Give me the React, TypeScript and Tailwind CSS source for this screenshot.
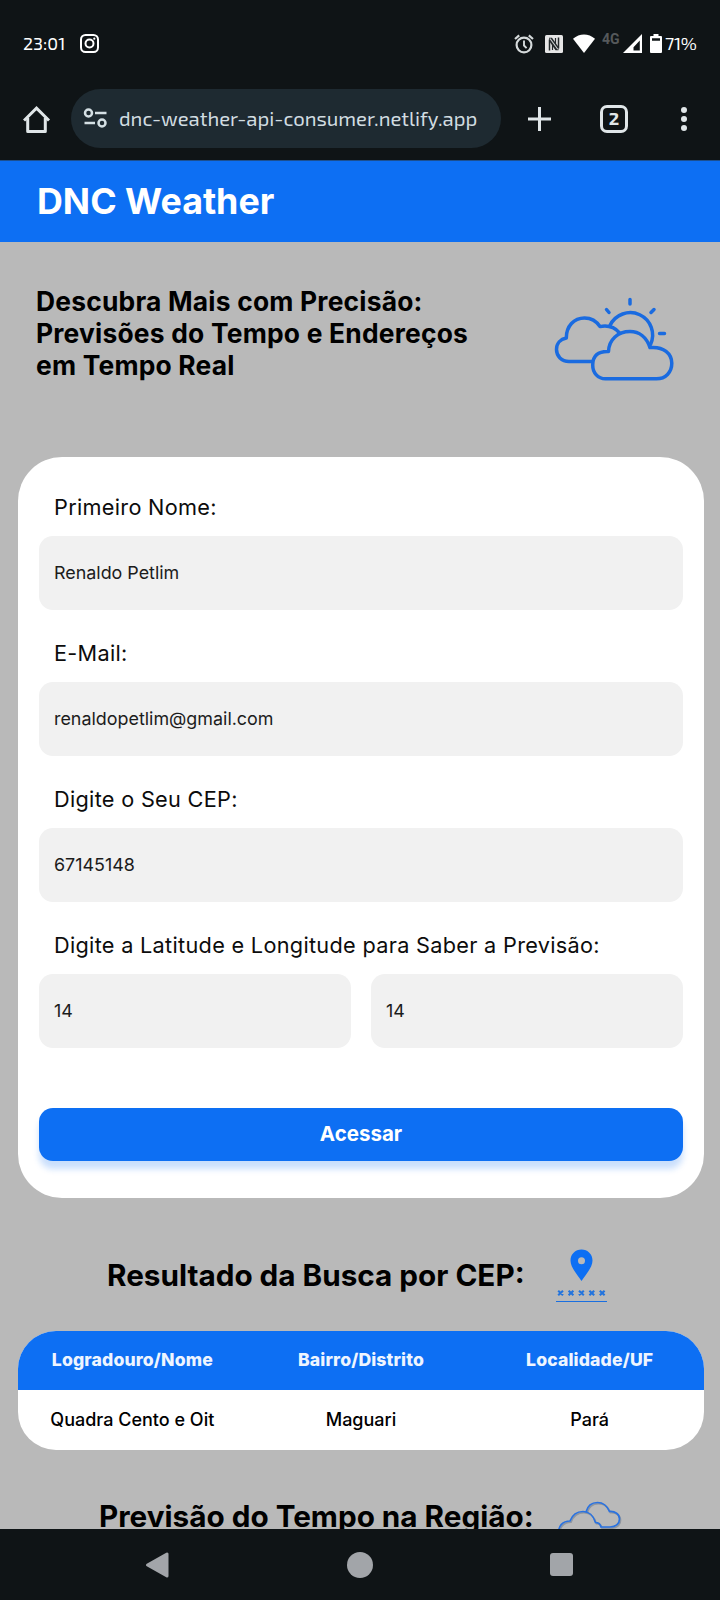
import type { ReactNode } from "react";

function StatusBar() {
  return (
    <div className="flex h-[87px] shrink-0 items-center pl-[23px] pr-[23px] font-['Exo_2','Noto_Sans',sans-serif] text-white">
      <span className="w-[42px] whitespace-nowrap text-[18px]">23:01</span>
      <svg className="ml-[15px]" width="19" height="19" viewBox="0 0 19 19" fill="none" stroke="white" strokeWidth="2">
        <rect x="1" y="1" width="17" height="17" rx="4.5" />
        <circle cx="9.5" cy="9.5" r="4" />
        <circle cx="14.3" cy="4.7" r="1.1" fill="white" stroke="none" />
      </svg>
      <div className="ml-auto flex items-center">
        <svg width="20" height="20" viewBox="0 0 20 20" fill="none" stroke="#d5dadb" strokeWidth="2.2">
          <circle cx="10" cy="11" r="7.4" />
          <path d="M10 6.500v5l2.600 2.600" strokeWidth="1.900" />
          <path d="M1 5 5.200 1.400M19 5l-4.200-3.600" />
        </svg>
        <svg className="ml-[11px]" width="18" height="18" viewBox="0 0 18 18">
          <rect width="18" height="18" rx="1.5" fill="#e6e6e6" />
          <path d="M4.500 15.500V4.500M13.500 2.500v11" fill="none" stroke="#22282a" strokeWidth="1.500" />
          <path d="M4 2.800h3L13.500 12V15.200h-3L4.500 6.500Z" fill="#22282a" />
          <path d="M7.500 15V8.500M10.500 3v6.500" fill="none" stroke="#22282a" strokeWidth="1.200" />
          <path d="M5 3.500 12.800 14.300" fill="none" stroke="#cfd2d3" strokeWidth="1.100" />
        </svg>
        <svg className="ml-[10px]" width="22" height="19" viewBox="0 0 22 19">
          <path d="M0 4.800C6.500-1 15.500-1 22 4.800L11 19Z" fill="white" />
        </svg>
        <span className="ml-[7px] w-[18px] -translate-y-[4px] whitespace-nowrap font-['Roboto',sans-serif] text-[14px] font-bold text-[#55595b]">4G</span>
        <svg className="ml-[3px]" width="19" height="19" viewBox="0 0 19 19">
          <path fillRule="evenodd" d="M19 0v19H0ZM16.800 6.500l-6.300 6.800v3.300h6.300Z" fill="white" />
        </svg>
        <svg className="ml-[8px]" width="12" height="19" viewBox="0 0 12 19">
          <path fillRule="evenodd" d="M3.500 0h5v2H11q1 0 1 1v15q0 1-1 1H1q-1 0-1-1V3q0-1 1-1h2.500ZM2 4.200v2.600h8V4.200Z" fill="white" />
        </svg>
        <span className="ml-[3px] w-[32px] whitespace-nowrap text-[18px] tracking-[-0.3px]">71%</span>
      </div>
    </div>
  );
}

function BrowserBar() {
  return (
    <div className="flex h-[73px] shrink-0 items-start pl-[23px] pt-[2px]">
      <svg className="mt-[17px]" width="28" height="28" viewBox="0 0 28 28" fill="none" stroke="#e0e6e8" strokeWidth="3">
        <path d="M1 14.500 13.500 2.200 26 14.500" />
        <path d="M4.700 12v13.500h17.600V12" strokeLinejoin="round" />
      </svg>
      <div className="ml-[20px] flex h-[59px] w-[430px] items-center rounded-full bg-[#1e2a31] pl-[12px]">
        <svg className="-mt-[2px]" width="25" height="20" viewBox="0 0 25 20" fill="none" stroke="#d5e0e4" strokeWidth="2.500">
          <circle cx="5.500" cy="5" r="3.500" />
          <circle cx="19" cy="15" r="3.500" />
          <path d="M12 5h11.500M1.500 15H12" />
        </svg>
        <span className="-mt-px ml-[11px] whitespace-nowrap font-['Exo_2','Noto_Sans',sans-serif] text-[20.300px] leading-[30px] text-[#d2dde1]">
          dnc-weather-api-consumer.netlify.app
        </span>
      </div>
      <svg className="ml-[27px] mt-[18px]" width="23" height="24" viewBox="0 0 23 24" stroke="#e0e6e8" strokeWidth="3">
        <path d="M11.500 0v24M0 12h23" />
      </svg>
      <div className="ml-[49px] mt-[16px] flex h-[28px] w-[28px] items-center justify-center rounded-[7px] border-3 border-[#e0e6e8] pb-[2px] font-['Exo_2','Noto_Sans',sans-serif] text-[18px] font-bold leading-none text-[#e0e6e8]">
        2
      </div>
      <svg className="ml-[53px] mt-[17px]" width="6" height="26" viewBox="0 0 6 26" fill="#e0e6e8">
        <circle cx="3" cy="4" r="3" />
        <circle cx="3" cy="13" r="3" />
        <circle cx="3" cy="22" r="3" />
      </svg>
    </div>
  );
}

function SunCloudIcon() {
  return (
    <svg className="mt-[54px] ml-auto shrink-0" width="122" height="86" viewBox="554 295 122 86" fill="none" stroke="#1a6be0" strokeWidth="3.500" strokeLinecap="round" strokeLinejoin="round">
      <path d="M592 360.500h-23c-7.500 0-12.500-5.500-12.500-12 0-6 4-10.500 9.800-11.500C566.300 325 574 317 584.500 317c7 0 12 3.200 15.500 8.600 8-1.600 14.500.500 19.500 6.200" />
      <path d="M610 324.500a22 22 0 0 1 40.500 19" />
      <path d="M605.500 377.800h51c9 0 15.300-6.500 15.300-15.500 0-9.500-8-17-21.800-15.700C646.500 336 639 330.500 630 330.500c-12 0-21 8-21.500 20C598 350 592.700 355 592.700 364c0 8 5.300 13.800 12.800 13.800Z" />
      <path d="M630 298.500v4.500M606.500 308.500l2.500 3M654 308.500l-3 3M659.500 332.500h5" />
    </svg>
  );
}

function Field({ label, value }: { label: string; value: string }) {
  return (
    <div className="h-[146px]">
      <Label>{label}</Label>
      <Box>{value}</Box>
    </div>
  );
}

function Label({ children }: { children: ReactNode }) {
  return (
    <label className="flex h-[48px] items-start pl-[15px] pt-[1px] text-[21.700px] leading-[36px] tracking-[0.300px] text-[#0c0c0c]">{children}</label>
  );
}

function Box({ children }: { children: ReactNode }) {
  return (
    <div className="flex h-[74px] flex-1 items-center rounded-[14px] bg-[#f1f1f1] px-[15px] text-[17.900px] text-[#1c1c1c]">
      {children}
    </div>
  );
}

function PinIcon() {
  return (
    <svg className="shrink-0" width="52" height="54" viewBox="0 0 52 54">
      <path fillRule="evenodd" d="M25.500.500C31.700.500 36.500 5.200 36.500 11.500 36.500 18 31 24 25.500 32 20 24 14.500 18 14.500 11.500 14.500 5.200 19.300.500 25.500.500Zm0 7.800a3.500 3.500 0 1 0 0 7 3.500 3.500 0 0 0 0-7Z" fill="#0d6ff3" />
      <path d="M2.200 41.700l4.800 4.600m0-4.600-4.800 4.600M12.600 41.700l4.800 4.600m0-4.600-4.800 4.600M23 41.700l4.800 4.600m0-4.600-4.800 4.600M33.400 41.700l4.800 4.600m0-4.600-4.800 4.600M43.800 41.700l4.800 4.600m0-4.600-4.800 4.600" stroke="#2374dd" strokeWidth="2.100" />
      <path d="M0 52.500h51" stroke="#1a6fe0" strokeWidth="1.200" />
    </svg>
  );
}

function CloudsIcon() {
  return (
    <svg className="shrink-0" width="66" height="40" viewBox="556 1500 66 40" fill="none" strokeWidth="1.700">
      <g stroke="#8f969f" transform="translate(1 1.200)">
        <path d="M558.500 1533c0-7 4-12 11.500-12 2.500-6.500 7.500-9.500 13-9.500s10.500 4 12.500 11c3 0 5 2 5.500 4.500h9c6 0 9.500-3.500 9.500-8 0-5-4.500-8-10-7.500-2.500-6-7-9-12-9-6 0-10 3.500-11.500 9.500" />
      </g>
      <g stroke="#2a72e0">
        <path d="M558.500 1533c0-7 4-12 11.500-12 2.500-6.500 7.500-9.500 13-9.500s10.500 4 12.500 11c3 0 5 2 5.500 4.500h9c6 0 9.500-3.500 9.500-8 0-5-4.500-8-10-7.500-2.500-6-7-9-12-9-6 0-10 3.500-11.500 9.500" />
      </g>
    </svg>
  );
}

export default function App() {
  return (
    <div className="flex h-[1600px] w-[720px] flex-col overflow-hidden bg-[#0f1416] font-['Inter',sans-serif] text-black">
      <StatusBar />
      <BrowserBar />
      <div className="flex h-[1369px] shrink-0 flex-col overflow-hidden bg-[#b9b9b9] [font-optical-sizing:none]">
        <header className="flex h-[82px] shrink-0 items-center border-t border-[#1c4f8f] bg-[#0d6ff3] pb-[2px] pl-[37px]">
          <h1 className="whitespace-nowrap text-[35.800px] font-bold leading-[36px] text-white">DNC Weather</h1>
        </header>
        <section className="flex h-[215px] shrink-0 pl-[36px] pr-[44px]">
          <h2 className="mt-[43px] whitespace-nowrap text-[26.400px] font-bold leading-[32px] tracking-[0.210px]">
            Descubra Mais com Precisão:
            <br />
            Previsões do Tempo e Endereços
            <br />
            em Tempo Real
          </h2>
          <SunCloudIcon />
        </section>
        <form className="ml-[18px] h-[741px] w-[686px] shrink-0 rounded-[44px] bg-white pl-[21px] pr-[21px] pt-[31px]">
          <Field label="Primeiro Nome:" value="Renaldo Petlim" />
          <Field label="E-Mail:" value="renaldopetlim@gmail.com" />
          <Field label="Digite o Seu CEP:" value="67145148" />
          <Label>Digite a Latitude e Longitude para Saber a Previsão:</Label>
          <div className="flex gap-[20px]">
            <Box>14</Box>
            <Box>14</Box>
          </div>
          <button type="button" className="mt-[60px] h-[53px] w-full rounded-[14px] bg-[#0d6ff3] text-[20.500px] font-bold text-white shadow-[0_8px_6px_rgba(13,111,243,0.22)]">
            Acessar
          </button>
        </form>
        <div className="flex h-[133px] shrink-0 items-start pl-[107px]">
          <h2 className="mt-[59px] w-[449px] whitespace-nowrap text-[29.700px] font-bold leading-[36px]">Resultado da Busca por CEP:</h2>
          <div className="mt-[51px]">
            <PinIcon />
          </div>
        </div>
        <div className="ml-[18px] w-[686px] shrink-0 overflow-hidden rounded-[38px] bg-white text-center">
          <div className="grid h-[59px] grid-cols-3 items-center bg-[#0d6ff3] text-[17.600px] font-extrabold tracking-[0.150px] text-[#eef5ff]">
            <span>Logradouro/Nome</span>
            <span>Bairro/Distrito</span>
            <span>Localidade/UF</span>
          </div>
          <div className="grid h-[60px] grid-cols-3 items-center pb-px text-[18px] font-medium">
            <span>Quadra Cento e Oit</span>
            <span>Maguari</span>
            <span>Pará</span>
          </div>
        </div>
        <div className="flex shrink-0 items-start pl-[99px]">
          <h2 className="mt-[48px] w-[457px] whitespace-nowrap text-[29.700px] font-bold leading-[36px]">Previsão do Tempo na Região:</h2>
          <div className="mt-[50px]">
            <CloudsIcon />
          </div>
        </div>
      </div>
      <nav className="flex h-[71px] shrink-0 items-center pl-[145px]">
        <svg width="24" height="28" viewBox="0 0 24 28">
          <path d="M2.500 14 22 3v22Z" fill="#a2a5a9" stroke="#a2a5a9" strokeWidth="3" strokeLinejoin="round" />
        </svg>
        <span className="ml-[178px] h-[26px] w-[26px] rounded-full bg-[#a2a5a9]" />
        <span className="ml-[177px] h-[23px] w-[23px] rounded-[3px] bg-[#a2a5a9]" />
      </nav>
    </div>
  );
}
